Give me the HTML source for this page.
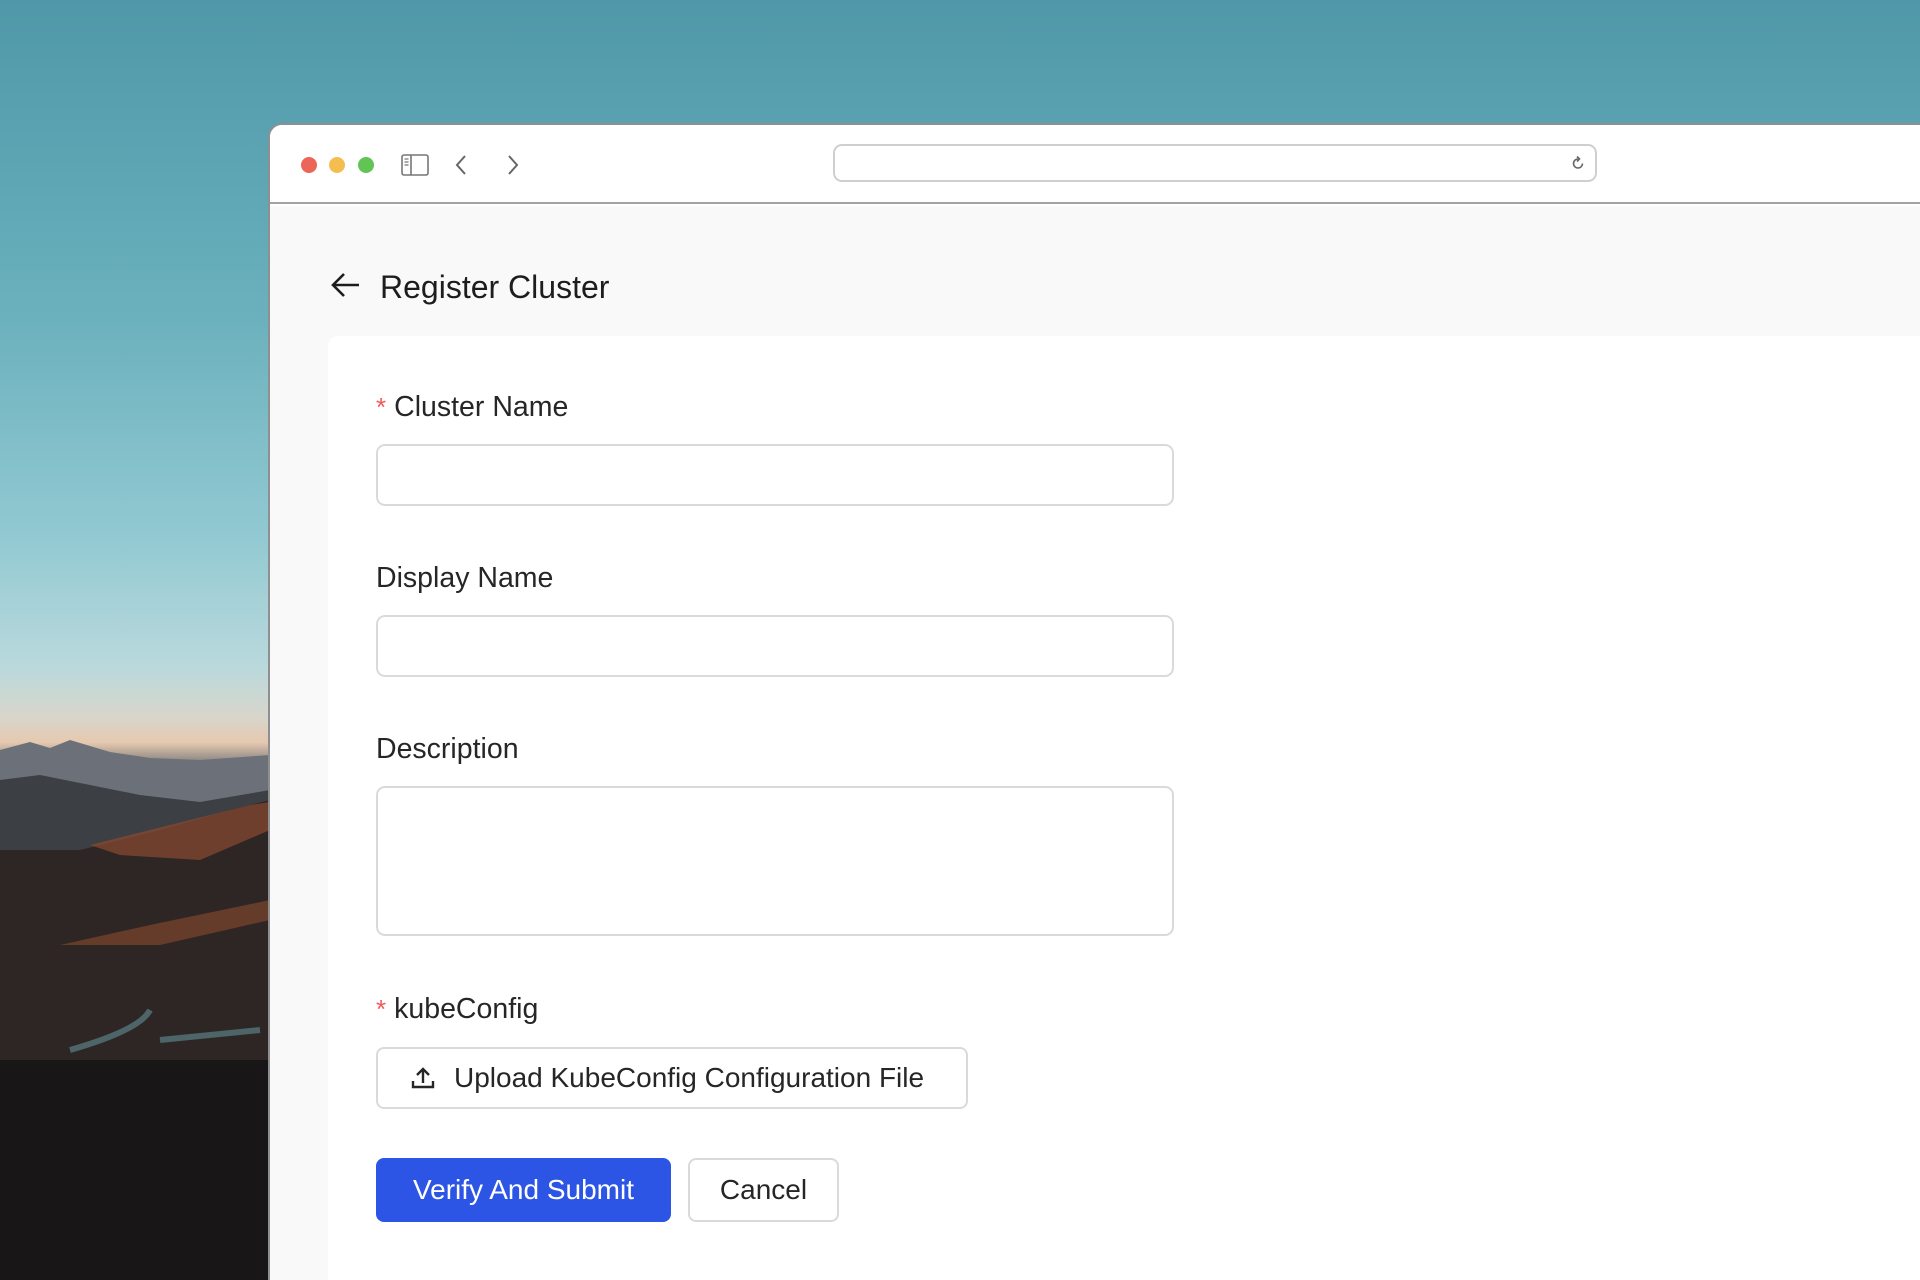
<!DOCTYPE html>
<html style="overflow:hidden;width:1920px;height:1280px"><head><meta charset="utf-8"><style>
*{box-sizing:border-box;margin:0;padding:0}
body{width:1920px;height:1280px;overflow:hidden;position:relative;font-family:"Liberation Sans",Arial,sans-serif;
background:linear-gradient(180deg,#4f98a9 0%,#6bb1bd 25%,#92c9d2 42%,#b9d9dc 52%,#d8d6cc 56%,#e6c9b0 58%,#6e6f74 60%,#3a3c40 66%,#2a2523 75%,#1c1a1a 85%,#141414 100%);}
.mtn{position:absolute;left:0;top:730px;width:270px;height:550px;}
.win{position:absolute;left:268px;top:123px;width:1652px;height:1157px;background:#fff;border-radius:14px 0 0 0;border:2px solid #8d8f90;border-right:none;border-bottom:none;overflow:hidden}
.tb{height:79px;border-bottom:2px solid #a3a3a3;position:relative;background:#fff}
.dot{position:absolute;top:32px;width:16px;height:16px;border-radius:50%}
.addr{position:absolute;left:563px;top:19px;width:764px;height:38px;border:2.5px solid #cfcfcf;border-radius:9px}
.page{position:absolute;top:81px;left:0;right:0;bottom:0;background:#f9f9f9}
.card{position:absolute;left:58px;top:130px;right:0;bottom:0;background:#fff;border-radius:10px 0 0 0}
.title{position:absolute;left:110px;top:63px;font-size:32px;color:#1d1d1f}
.lbl{position:absolute;left:48px;font-size:28.5px;color:#262626}
.lbl .s{color:#f05a5a;margin-right:8px;font-size:26px}
.in{position:absolute;left:48px;width:798px;border:2px solid #dadada;border-radius:9px;background:#fff}
.btn{position:absolute;border-radius:8px;font-size:28px;display:flex;align-items:center;justify-content:center}
</style></head><body>
<svg class="mtn" viewBox="0 0 270 550" preserveAspectRatio="none">
<path d="M0 20 L30 12 L50 18 L70 10 L110 22 L150 28 L200 30 L270 25 L270 550 L0 550Z" fill="#6c7078"/>
<path d="M0 50 L40 45 L90 55 L140 65 L200 72 L270 60 L270 550 L0 550Z" fill="#3c3f44"/>
<path d="M80 120 L160 100 L230 80 L270 70 L270 550 L0 550 L0 120Z" fill="#2e2624"/>
<path d="M90 115 L170 95 L250 75 L270 72 L270 100 L200 130 L120 125Z" fill="#8a4a30" opacity=".7"/>
<path d="M60 215 L150 195 L270 170 L270 190 L160 215Z" fill="#8b4a2f" opacity=".6"/>
<path d="M0 330 L270 330 L270 550 L0 550Z" fill="#181616"/>
<path d="M70 320 Q140 300 150 280 M160 310 L260 300" stroke="#4d6468" stroke-width="6" fill="none"/>
</svg>
<div class="win">
 <div class="tb">
  <div class="dot" style="left:31px;background:#ec6559"></div>
  <div class="dot" style="left:59px;background:#f4bd4f"></div>
  <div class="dot" style="left:88px;background:#61c454"></div>
  <svg style="position:absolute;left:131px;top:29px" width="28" height="22" viewBox="0 0 28 22"><rect x="1" y="1" width="26" height="20" rx="2" fill="none" stroke="#777" stroke-width="1.6"/><line x1="10" y1="1" x2="10" y2="21" stroke="#777" stroke-width="1.6"/><path d="M3.5 5h4M3.5 8h4M3.5 11h4" stroke="#777" stroke-width="1.2"/></svg>
  <svg style="position:absolute;left:184px;top:29px" width="14" height="22" viewBox="0 0 14 22"><path d="M11 2L3 11l8 9" fill="none" stroke="#666" stroke-width="2"/></svg>
  <svg style="position:absolute;left:236px;top:29px" width="14" height="22" viewBox="0 0 14 22"><path d="M3 2l8 9-8 9" fill="none" stroke="#666" stroke-width="2"/></svg>
  <div class="addr"><svg style="position:absolute;right:8px;top:8px" width="18" height="18" viewBox="0 0 18 18"><path d="M13.5 9.5A4.5 4.5 0 1 1 9 5" fill="none" stroke="#666" stroke-width="1.6"/><path d="M8 2.5l2.5 2.5L8 7.5" fill="none" stroke="#666" stroke-width="1.6"/></svg></div>
 </div>
 <div class="page">
  <svg style="position:absolute;left:61px;top:66px" width="30" height="26" viewBox="0 0 30 26"><path d="M28 13H3M13 2L2 13l11 11" fill="none" stroke="#1d1d1f" stroke-width="2.6"/></svg>
  <div class="title">Register Cluster</div>
  <div class="card">
   <div class="lbl" style="top:55px"><span class="s">*</span>Cluster Name</div>
   <div class="in" style="top:108px;height:62px"></div>
   <div class="lbl" style="top:226px">Display Name</div>
   <div class="in" style="top:279px;height:62px"></div>
   <div class="lbl" style="top:397px">Description</div>
   <div class="in" style="top:450px;height:150px"></div>
   <div class="lbl" style="top:657px"><span class="s">*</span>kubeConfig</div>
   <div class="btn" style="left:48px;top:711px;width:592px;height:62px;border:2px solid #dadada;color:#262626;justify-content:flex-start;padding-left:32px"><svg width="26" height="24" viewBox="0 0 26 24" style="margin-right:18px"><path d="M13 17V3M7 9l6-6 6 6M3 15v6h20v-6" fill="none" stroke="#262626" stroke-width="2.4"/></svg>Upload KubeConfig Configuration File</div>
   <div class="btn" style="left:48px;top:822px;width:295px;height:64px;background:#2c55e6;color:#fff">Verify And Submit</div>
   <div class="btn" style="left:360px;top:822px;width:151px;height:64px;border:2px solid #dadada;color:#262626">Cancel</div>
  </div>
 </div>
</div>
</body></html>
